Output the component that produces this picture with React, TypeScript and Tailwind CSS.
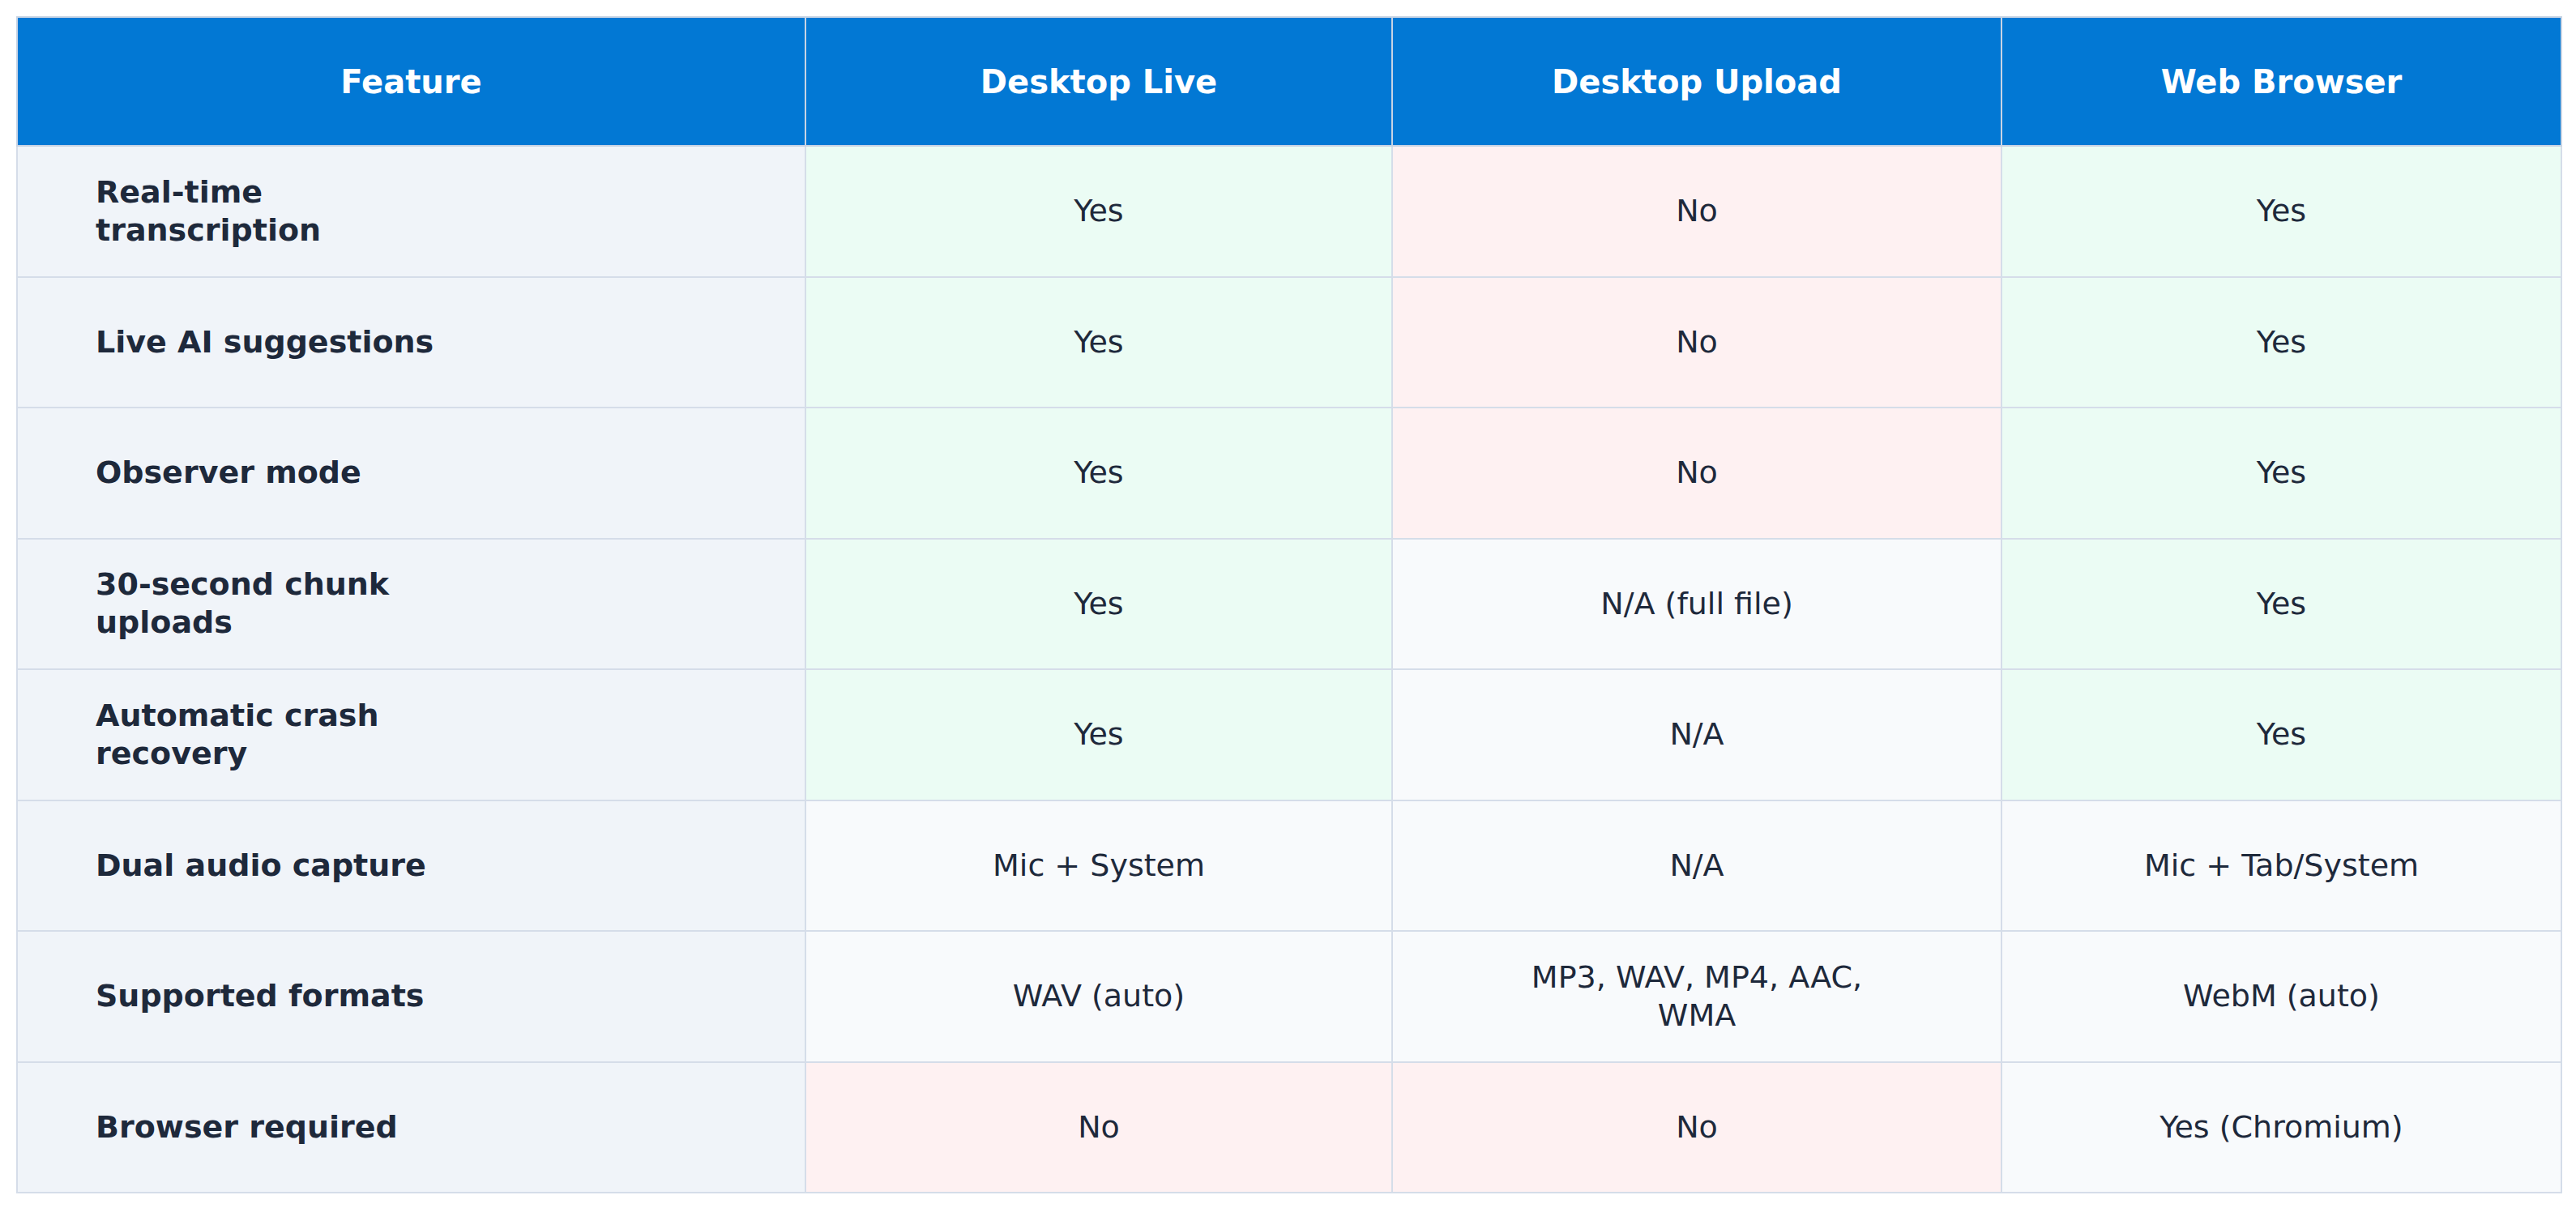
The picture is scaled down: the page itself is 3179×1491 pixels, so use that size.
import React from 'react'

type Tone = 'yes' | 'no' | 'na'
type Row = { feature: string; cells: [string, Tone][] }

const rows: Row[] = [
  { feature: 'Real-time transcription', cells: [['Yes', 'yes'], ['No', 'no'], ['Yes', 'yes']] },
  { feature: 'Live AI suggestions', cells: [['Yes', 'yes'], ['No', 'no'], ['Yes', 'yes']] },
  { feature: 'Observer mode', cells: [['Yes', 'yes'], ['No', 'no'], ['Yes', 'yes']] },
  { feature: '30-second chunk uploads', cells: [['Yes', 'yes'], ['N/A (full file)', 'na'], ['Yes', 'yes']] },
  { feature: 'Automatic crash recovery', cells: [['Yes', 'yes'], ['N/A', 'na'], ['Yes', 'yes']] },
  { feature: 'Dual audio capture', cells: [['Mic + System', 'na'], ['N/A', 'na'], ['Mic + Tab/System', 'na']] },
  { feature: 'Supported formats', cells: [['WAV (auto)', 'na'], ['MP3, WAV, MP4, AAC, WMA', 'na'], ['WebM (auto)', 'na']] },
  { feature: 'Browser required', cells: [['No', 'no'], ['No', 'no'], ['Yes (Chromium)', 'na']] },
]

const toneBg: Record<Tone, string> = {
  yes: 'bg-[#ebfcf4]',
  no: 'bg-[#fef1f2]',
  na: 'bg-[#f8fafc]',
}

export default function App() {
  return (
    <div className="min-h-screen bg-white p-[20px] font-[DejaVu_Sans,sans-serif] text-[#1e293b]">
      <table className="w-[3140px] table-fixed border-collapse">
        <colgroup>
          <col className="w-[973px]" />
          <col className="w-[724px]" />
          <col className="w-[752px]" />
          <col className="w-[691px]" />
        </colgroup>
        <thead>
          {/* header */}
          <tr className="h-[159px] bg-[#0278d4] text-white">
            {['Feature', 'Desktop Live', 'Desktop Upload', 'Web Browser'].map((h) => (
              <th key={h} className="border-2 border-[#c8d4e4] text-[40px] font-bold">
                {h}
              </th>
            ))}
          </tr>
        </thead>
        <tbody>
          {rows.map((r) => (
            <tr key={r.feature} className="h-[161.5px]">
              <td className="border-2 border-[#d5dde9] bg-[#f0f4f9] pl-[96px] text-left align-middle">
                <div className="max-w-[460px] text-[38px] font-bold leading-[47px]">{r.feature}</div>
              </td>
              {r.cells.map(([t, tone], i) => (
                <td key={i} className={`border-2 border-[#d5dde9] ${toneBg[tone]} text-center align-middle`}>
                  <div className="mx-auto max-w-[460px] text-[38px] leading-[47px]">{t}</div>
                </td>
              ))}
            </tr>
          ))}
        </tbody>
      </table>
    </div>
  )
}
